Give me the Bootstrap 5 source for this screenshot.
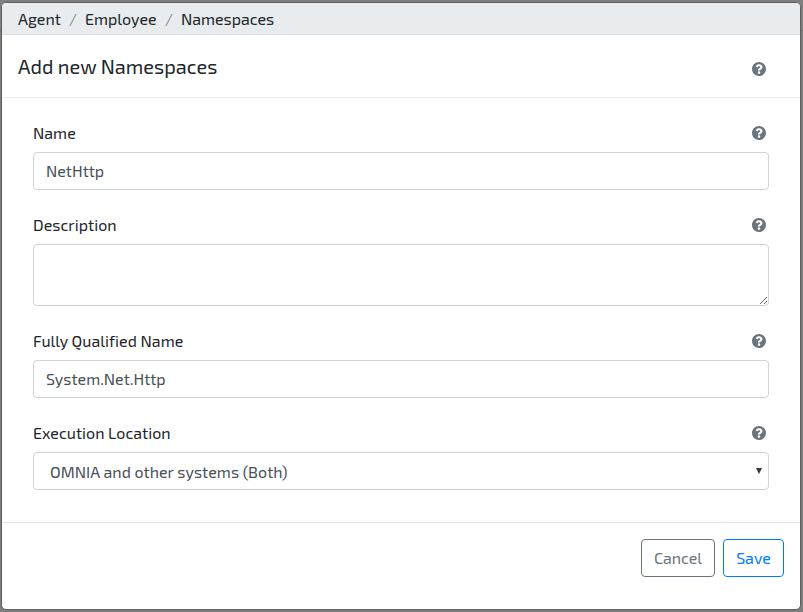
<!DOCTYPE html>
<html lang="en">
<head>
<meta charset="utf-8">
<meta name="viewport" content="width=device-width, initial-scale=1">
<title>Add new Namespaces</title>
<link href="https://cdn.jsdelivr.net/npm/bootstrap@5.3.0/dist/css/bootstrap.min.css" rel="stylesheet">
<style>
  body { background: linear-gradient(#7f7f7f 30px, #686868 30px, #686868 31px, #7d7d7d 31px); font-family: "Exo 2", Roboto, sans-serif; height: 612px; overflow: hidden; padding: 2px 2px 2px 1px; }
  .dialog-panel { height: 608px; border: 1px solid #5e5e5e; border-radius: 5px; overflow: hidden; background: #fff; color: #212529; }
  .crumb-bar { --bs-breadcrumb-divider-color: #868e96; --bs-breadcrumb-item-padding-x: 8px; height: 32px; padding: 4px 16px; background: #e9ecef; border-bottom: 1px solid #dee2e6; }
  .panel-head { height: 63px; padding: 0 34px 0 16px; border-bottom: 1px solid #e9ecef; }
  .panel-head h5 { font-size: 20px; font-weight: 400; line-height: 30px; margin: 0 0 1px; }
  .panel-head .help { margin-top: 6px; }
  .panel-body { height: 424px; padding: 23px 31px 0; }
  .field-row { margin-bottom: 23px; letter-spacing: .03px; }
  .field-row label { line-height: 24px; }
  .field-top { height: 24px; margin-bottom: 7px; padding-right: 3px; }
  .field-row .form-control, .field-row .form-select { height: 38px; border-color: #ced4da; border-radius: 4px; color: #495057; }
  .field-row input.form-control { padding: 5px 12px 7px; }
  .field-row textarea.form-control { height: 62px; min-height: 62px; }
  .field-row .form-select { padding: 7px 16px 5px; letter-spacing: .03px; background: #fff url("data:image/svg+xml,%3Csvg xmlns='http://www.w3.org/2000/svg' viewBox='0 0 6 6'%3E%3Cpath fill='%23343a40' d='M0 0h6L3 6z'/%3E%3C/svg%3E") no-repeat right 6px top 15px / 6px 6px; }
  .panel-foot { border-top: 1px solid #e3e6e9; padding: 16px; }
  .panel-foot .btn { height: 38px; border-radius: 4px; padding: 6px 0; }
  .btn-outline-primary { --bs-btn-color: #007bff; --bs-btn-border-color: #007bff; }
  .w-cancel { width: 74px; } .w-save { width: 61px; }
  .help { width: 14px; height: 14px; fill: #6c757d; display: block; }
</style>
<script src="https://cdn.jsdelivr.net/npm/bootstrap@5.3.0/dist/js/bootstrap.bundle.min.js"></script>
</head>
<body>
<svg class="d-none"><symbol id="q" viewBox="8 8 496 496"><path d="M504 256c0 136.997-111.043 248-248 248S8 392.997 8 256C8 119.083 119.043 8 256 8s248 111.083 248 248zM262.655 90c-54.497 0-89.255 22.957-116.549 63.758-3.536 5.286-2.353 12.415 2.715 16.258l34.699 26.31c5.205 3.947 12.621 3.008 16.665-2.122 17.864-22.658 30.113-35.797 57.303-35.797 20.429 0 45.698 13.148 45.698 32.958 0 14.976-12.363 22.667-32.534 33.976C247.128 238.528 216 254.941 216 296v4c0 6.627 5.373 12 12 12h56c6.627 0 12-5.373 12-12v-1.333c0-28.462 83.186-29.647 83.186-106.667 0-58.002-60.165-102-116.531-102zM256 338c-25.365 0-46 20.635-46 46 0 25.364 20.635 46 46 46s46-20.636 46-46c0-25.365-20.635-46-46-46z"/></symbol></svg>
<main class="dialog-panel">
  <ol class="breadcrumb crumb-bar mb-0 align-items-center">
    <li class="breadcrumb-item">Agent</li>
    <li class="breadcrumb-item">Employee</li>
    <li class="breadcrumb-item">Namespaces</li>
  </ol>
  <header class="panel-head d-flex align-items-center justify-content-between">
    <h5>Add new Namespaces</h5>
    <svg class="help"><use href="#q"/></svg>
  </header>
  <form class="panel-body">
    <div class="field-row">
      <div class="field-top d-flex align-items-center justify-content-between"><label for="f1">Name</label><svg class="help"><use href="#q"/></svg></div>
      <input id="f1" class="form-control" value="NetHttp">
    </div>
    <div class="field-row">
      <div class="field-top d-flex align-items-center justify-content-between"><label for="f2">Description</label><svg class="help"><use href="#q"/></svg></div>
      <textarea id="f2" class="form-control d-block"></textarea>
    </div>
    <div class="field-row">
      <div class="field-top d-flex align-items-center justify-content-between"><label for="f3">Fully Qualified Name</label><svg class="help"><use href="#q"/></svg></div>
      <input id="f3" class="form-control" value="System.Net.Http">
    </div>
    <div class="field-row">
      <div class="field-top d-flex align-items-center justify-content-between"><label for="f4">Execution Location</label><svg class="help"><use href="#q"/></svg></div>
      <select id="f4" class="form-select"><option>OMNIA and other systems (Both)</option></select>
    </div>
  </form>
  <footer class="panel-foot d-flex justify-content-end gap-2">
    <button class="btn btn-outline-secondary w-cancel">Cancel</button>
    <button class="btn btn-outline-primary w-save">Save</button>
  </footer>
</main>
</body>
</html>
